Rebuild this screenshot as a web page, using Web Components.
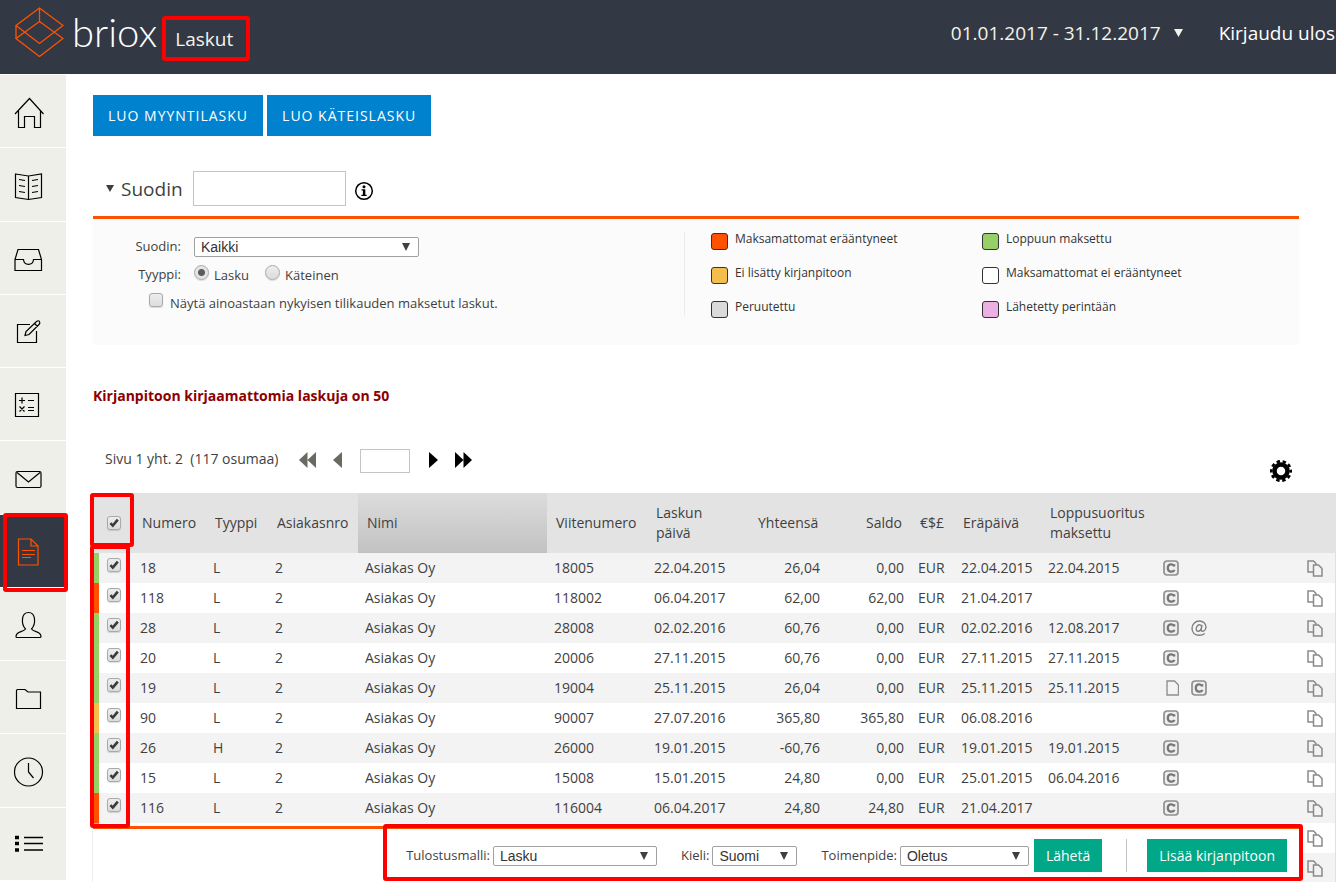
<!DOCTYPE html>
<html lang="fi">
<head>
<meta charset="utf-8">
<title>Laskut</title>
<style>
  html, body { margin: 0; height: 100%; }
  body { font: 14px/20px "Open Sans", "Noto Sans", sans-serif; color: #3f3f3f; background: #fff; overflow: hidden; }
</style>
</head>
<body>
<invoice-app></invoice-app>

<script>
const define = (name, html, setup) => customElements.define(name, class extends HTMLElement {
  constructor() {
    super();
    const t = document.createElement('template');
    t.innerHTML = html;
    this.attachShadow({ mode: 'open' }).append(t.content.cloneNode(true));
  }
  connectedCallback() { if (setup && !this.ready) { this.ready = true; setup(this, this.shadowRoot); } }
});

const tick = `
  input[type=checkbox], input[type=radio] {
    appearance: none; flex: none; box-sizing: border-box; width: 14px; height: 14px; margin: 0;
    border: 1px solid #a9a9a9; border-radius: 3px; background: linear-gradient(#ededed, #dcdcdc);
    box-shadow: 0 1px 1px #0002;
  }
  input[type=radio] { width: 15px; height: 15px; border-radius: 50%; }
  input[type=radio]:checked { background: radial-gradient(circle, #5b5b5b 0 3px, #e4e4e4 4px); }
  input[type=checkbox]:checked {
    background: url("data:image/svg+xml,%3Csvg xmlns='http://www.w3.org/2000/svg' viewBox='0 0 12 12'%3E%3Cpath d='M2.400 6.200l2.400 2.400L9.800 2.600' fill='none' stroke='%233b3b3b' stroke-width='2.600'/%3E%3C/svg%3E") center / 12px 12px no-repeat,
      linear-gradient(#ededed, #dcdcdc);
  }`;

const select = `
  select {
    appearance: none; box-sizing: border-box; height: 20px; margin: 0; padding: 0 24px 0 6px;
    border: 1px solid #a0a0a0; border-radius: 2px; color: #333;
    font: 14px/18px "Liberation Sans", Arial, sans-serif;
    background: #fff url("data:image/svg+xml,%3Csvg xmlns='http://www.w3.org/2000/svg' viewBox='0 0 8 8'%3E%3Cpath d='M0 0h8L4 8z' fill='%23404040'/%3E%3C/svg%3E") right 8px center / 8px 8px no-repeat;
  }`;

/* Red marker drawn around a part of the screen; its parent gives --inset. */
define('callout-frame', `
  <style>
    :host { position: absolute; inset: var(--inset, 0); z-index: 3; box-sizing: border-box;
      border: 4px solid #fe0000; border-radius: 3px; pointer-events: none; }
  </style>`);

define('app-header', `
  <style>
    :host { display: flex; align-items: center; flex: none; box-sizing: border-box; height: 74px; padding: 0 1px 10px 14px;
      background: #333845; color: #fff; font-size: 19px; line-height: 26px; }
    .logo { display: flex; align-items: center; color: inherit; text-decoration: none; }
    .logo svg { width: 50px; height: 50px; }
    .logo span { margin-left: 8px; font: 300 40px/48px Lato, sans-serif; }
    h1 { position: relative; margin: 14px 0 0 18px; font-size: 19px; font-weight: 500; line-height: 26px; --inset: -10px -17px -9px -13px; color: #f3f3ea; }
    nav { display: flex; align-items: center; margin: 2px 0 0 auto; }
    button { display: flex; align-items: center; gap: 13px; padding: 0; border: 0; background: none; font: inherit; color: #f3f3ea; }
    button svg { width: 9px; height: 8px; }
    nav a { margin-left: 36px; color: inherit; text-decoration: none; }
  </style>
  <a class="logo" href="#">
    <svg viewBox="0 0 50 50" fill="none" stroke="#ff5200" stroke-width="1.3"><path d="M25.500 1L2 18.500L25.500 36.500L49 18.500ZM25.500 1V14.500M25.500 14.500L2 31.500L25.500 49.500L49 31.500ZM2 18.500V31.500"/></svg>
    <span>briox</span>
  </a>
  <h1>Laskut<callout-frame></callout-frame></h1>
  <nav>
    <button>01.01.2017 - 31.12.2017 <svg viewBox="0 0 9 8"><path d="M0 0h9L4.500 8z" fill="currentColor"/></svg></button>
    <a href="#">Kirjaudu ulos</a>
  </nav>`);

define('nav-item', `
  <style>
    :host { display: flex; flex: 1; position: relative; min-height: 40px; border-bottom: 1px solid #fff; background: #eeefe9; color: #000; }
    :host([active]) { background: #333845; color: #ff5200; --inset: -2px -2px -5px 3px; }
    a { display: flex; flex: 1; align-items: center; padding: 3px 0 0 12px; color: inherit; }
    callout-frame { display: none; }
    :host([active]) callout-frame { display: block; }
  </style>
  <a href="#"><slot></slot></a><callout-frame></callout-frame>`,
  (el, root) => root.querySelector('a').setAttribute('aria-label', el.getAttribute('label')));

define('side-nav', `
  <style>
    :host { display: flex; flex-direction: column; flex: none; width: 66px; padding: 1px 0; box-sizing: border-box; }
    svg { width: 34px; height: 34px; fill: none; stroke: currentColor; stroke-width: 1.2; }
  </style>
  <nav-item label="Etusivu"><svg viewBox="0 0 34 34"><path d="M3 18L17.500 2.500L31.500 18M6.500 15V31.500H12.500V20.500H22.500V31.500H28.500V15"/></svg></nav-item>
  <nav-item label="Kirjanpito"><svg viewBox="0 0 34 34"><path d="M3.500 5L16.500 7L29.500 5V28.500L16.500 30.500L3.500 28.500ZM16.500 7V30.500M7 10.500l6 1M7 16.500l6 1M7 22.500l6 1M26 10.500l-6 1M26 16.500l-6 1M26 22.500l-6 1"/></svg></nav-item>
  <nav-item label="Saapuneet"><svg viewBox="0 0 34 34"><path d="M3 17.500L6 7.500H26.500L29.500 17.500V28.500H3ZM3 17.500H11.500C12 24 21 24 21.500 17.500H29.500"/></svg></nav-item>
  <nav-item label="Muokkaa"><svg viewBox="0 0 34 34"><path d="M18 9.500H5.500V27.500H24.500V16M13 20.500L14 16.500L24.500 6.500Q26.500 5 27.500 6.500Q28.500 8 27 9.500L17 19.500ZM13 20.500L17 19.500M22.500 8.500l3 3"/></svg></nav-item>
  <nav-item label="Laskin"><svg viewBox="0 0 34 34"><path d="M3.500 4.500H26.500V27.500H3.500ZM7 11.500h6M10 8.500v6M16 11.500h6M7.500 17.500l5 5M12.500 17.500l-5 5M16 18.500h6M16 21.500h6"/></svg></nav-item>
  <nav-item label="Viestit"><svg viewBox="0 0 34 34"><rect x="4" y="9.500" width="25" height="16" rx="1.500"/><path d="M5 10.500L16.500 20L28 10.500"/></svg></nav-item>
  <nav-item label="Laskut" active><svg viewBox="0 0 34 34"><path d="M6.500 4H19L26 11V30H6.500ZM19 4V11H26M10 15.500h13M10 19.500h13M10 22.500h9"/></svg></nav-item>
  <nav-item label="Asiakkaat"><svg viewBox="0 0 34 34"><path d="M13.500 21C9 16 9 4.500 16.500 4.500S24 16 19.500 21C22 24.500 29 23 29 28.500Q29 29.500 28 29.500H5Q4 29.500 4 28.500C4 23 11 24.500 13.500 21Z"/></svg></nav-item>
  <nav-item label="Tiedostot"><svg viewBox="0 0 34 34"><path d="M4.500 26V8.500Q4.500 7.500 5.500 7.500H13L16 10H28.500V26.500H4.500Z"/></svg></nav-item>
  <nav-item label="Ajankäyttö"><svg viewBox="0 0 34 34"><circle cx="16.500" cy="17" r="14"/><path d="M16.500 8V17L21.500 23"/></svg></nav-item>
  <nav-item label="Luettelo"><svg viewBox="0 0 34 34"><path d="M3 9.500h4M3 15.500h4M3 22h4" stroke-width="3.500"/><path d="M12 9.500h19M12 15.500h19M12 22h19" stroke-width="1.400"/></svg></nav-item>`);

define('app-button', `
  <style>
    :host { display: block; }
    button { display: block; border: 0; padding: 0 15px; height: 41px; background: #0082cf; color: #fff; font: 14px/20px "Open Sans", sans-serif; letter-spacing: 1px; text-transform: uppercase; white-space: nowrap; }
    :host([kind=green]) button { height: 33px; padding: 0 12px; background: #00a887; letter-spacing: 0; text-transform: none; }
  </style>
  <button><slot></slot></button>`);

define('legend-item', `
  <style>
    :host { display: flex; gap: 7px; font-size: 12px; line-height: 14px; color: #333; }
    i { flex: none; box-sizing: border-box; width: 17px; height: 17px; margin-top: 1px; border: 1px solid #333; border-radius: 3px; background: var(--swatch); }
  </style>
  <i></i><span><slot></slot></span>`);

define('invoice-filter', `
  <style>
    :host { display: block; }
    header { display: flex; align-items: center; padding-left: 13px; height: 35px; }
    header label { display: flex; align-items: center; gap: 7px; font-size: 19px; line-height: 28px; }
    header label svg { width: 8px; height: 7px; }
    header input { box-sizing: border-box; width: 153px; height: 35px; margin: 0 0 0 10px; border: 1px solid #c4c4c4; font: inherit; }
    .info { width: 20px; height: 20px; margin: 4px 0 0 8px; }
    .panel { display: flex; margin-top: 10px; border-top: 3px solid #ff5200; box-sizing: border-box; min-height: 129px; background: #fbfbfb; }
    .form { width: 49%; padding-top: 18px; font-size: 13px; box-sizing: border-box; }
    .row { display: grid; grid-template-columns: 88px auto; column-gap: 13px; justify-content: start; margin-bottom: 8px; line-height: 18px; }
    .row > :first-child { text-align: right; }
    .row select { width: 225px; }
    .radios { display: flex; gap: 16px; }
    .radios label, .only { display: flex; gap: 5px; line-height: 20px; }
    .only { gap: 7px; padding-left: 56px; }
    .legend { display: grid; grid-template-columns: 271px auto; grid-auto-rows: 34px; align-self: start; box-sizing: border-box; height: 84px; margin-top: 13px; padding: 0 0 0 26px; border-left: 1px solid #ececec; }
    ${tick}${select}
  </style>
  <header>
    <label for="q"><svg viewBox="0 0 8 7"><path d="M0 0h8L4 7z" fill="#3f3f3f"/></svg>Suodin</label>
    <input id="q" type="text">
    <svg class="info" viewBox="0 0 20 20"><circle cx="10" cy="10" r="8.300" fill="none" stroke="#000" stroke-width="1.500"/><circle cx="10" cy="5.700" r="1.500"/><path d="M7.500 8.200h3.800v5.500h1.400v1.300H7.400v-1.300h1.500V9.500H7.500z"/></svg>
  </header>
  <div class="panel">
    <div class="form">
      <div class="row"><label for="f">Suodin:</label><select id="f"><option>Kaikki</option></select></div>
      <div class="row"><span>Tyyppi:</span><div class="radios">
        <label><input type="radio" name="t" checked>Lasku</label><label><input type="radio" name="t">Käteinen</label></div></div>
      <label class="only"><input type="checkbox">Näytä ainoastaan nykyisen tilikauden maksetut laskut.</label>
    </div>
    <div class="legend">
      <legend-item style="--swatch:#ff5200">Maksamattomat erääntyneet</legend-item>
      <legend-item style="--swatch:#98d068">Loppuun maksettu</legend-item>
      <legend-item style="--swatch:#f4bd4c">Ei lisätty kirjanpitoon</legend-item>
      <legend-item style="--swatch:#fff">Maksamattomat ei erääntyneet</legend-item>
      <legend-item style="--swatch:#dadada">Peruutettu</legend-item>
      <legend-item style="--swatch:#ecb0e4">Lähetetty perintään</legend-item>
    </div>
  </div>`);

define('result-pager', `
  <style>
    :host { display: flex; height: 33px; padding-left: 12px; }
    .pages { display: flex; align-items: center; height: 24px; }
    .pages > span { white-space: pre; padding-bottom: 4px; }
    button { display: flex; padding: 0; border: 0; background: none; }
    button svg { height: 16px; fill: #6a6a62; }
    button.on svg { fill: #000; }
    .pages button { padding-bottom: 2px; }
    .first { margin-left: 21px; }
    .prev, .last { margin-left: 17px; }
    .first svg, .last svg { width: 17px; }
    .prev svg, .next svg { width: 9px; }
    input { box-sizing: border-box; width: 50px; height: 24px; margin: 0 19px 0 18px; border: 1px solid #c4c4c4; }
    .gear { align-self: flex-end; margin-left: auto; margin-right: 7px; }
    .gear svg { width: 22px; height: 22px; }
  </style>
  <div class="pages">
    <span>Sivu 1 yht. 2  (117 osumaa)</span>
    <button class="first" aria-label="Ensimmäinen"><svg viewBox="0 0 17 16"><path d="M8.500 0v16L0 8zM17 0v16L8.500 8z"/></svg></button>
    <button class="prev" aria-label="Edellinen"><svg viewBox="0 0 9 16"><path d="M9 0v16L0 8z"/></svg></button>
    <input type="text" aria-label="Sivu">
    <button class="next on" aria-label="Seuraava"><svg viewBox="0 0 9 16"><path d="M0 0v16l9-8z"/></svg></button>
    <button class="last on" aria-label="Viimeinen"><svg viewBox="0 0 17 16"><path d="M0 0v16l8.500-8zM8.500 0v16L17 8z"/></svg></button>
  </div>
  <button class="gear on" aria-label="Asetukset"><svg viewBox="0 0 22 22"><circle cx="11" cy="11" r="6.500" fill="none" stroke="#000" stroke-width="4.500"/><circle cx="11" cy="11" r="9.700" fill="none" stroke="#000" stroke-width="2.600" stroke-dasharray="3.400 2.695" stroke-dashoffset="1.700"/></svg></button>`);

const icons = {
  c: '<svg viewBox="0 0 16 16"><rect x="1" y="1" width="14" height="14" rx="3" fill="#eee" stroke="#8f8f8f" stroke-width="1.700"/><path d="M11.200 6.400V4.300M11.200 6.400C10 3.500 4.800 3.600 4.800 8S10 12.500 11.600 10" fill="none" stroke="#777" stroke-width="2.200"/></svg>',
  at: '<svg viewBox="0 0 16 16"><path d="M11 4.800L10.200 9.500Q10 11.300 11.500 11.200C13.500 11 15 9 15 7C15 3.500 12 1 8.500 1C4 1 1 4.300 1 8.300C1 12.500 4 15.300 8.200 15.300Q11.500 15.300 13.800 13.500M10.700 7C10.500 4.300 7.800 4.300 6.300 6C4.800 7.800 4.700 11 6.800 11.200C8.600 11.300 10.200 9.500 10.700 7" fill="none" stroke="#808080" stroke-width="1.400"/></svg>',
  doc: '<svg viewBox="0 0 16 16"><path d="M4 1h7.500l4 4v10H4z" fill="none" stroke="#8f8f8f" stroke-width="1.400"/></svg>'
};
const copy = '<svg viewBox="0 0 16 17"><path d="M6.500 12H1V1h5.500L9 3.500V5M6.500 5H11.500L15 8.500V16H6.500Z" fill="none" stroke="#8a8a8a" stroke-width="1.500"/></svg>';
const G = '#98d068', R = '#ff5200', Y = '#f4bd4c';
const rows = [
  [G, '18', 'L', '18005', '22.04.2015', '26,04', '0,00', '22.04.2015', '22.04.2015', 'c'],
  [R, '118', 'L', '118002', '06.04.2017', '62,00', '62,00', '21.04.2017', '', 'c'],
  [G, '28', 'L', '28008', '02.02.2016', '60,76', '0,00', '02.02.2016', '12.08.2017', 'c at'],
  [G, '20', 'L', '20006', '27.11.2015', '60,76', '0,00', '27.11.2015', '27.11.2015', 'c'],
  [G, '19', 'L', '19004', '25.11.2015', '26,04', '0,00', '25.11.2015', '25.11.2015', 'doc c'],
  [Y, '90', 'L', '90007', '27.07.2016', '365,80', '365,80', '06.08.2016', '', 'c'],
  [G, '26', 'H', '26000', '19.01.2015', '-60,76', '0,00', '19.01.2015', '19.01.2015', 'c'],
  [G, '15', 'L', '15008', '15.01.2015', '24,80', '0,00', '25.01.2015', '06.04.2016', 'c'],
  [R, '116', 'L', '116004', '06.04.2017', '24,80', '24,80', '21.04.2017', '', 'c'],
  [G], [G]
];
const row = ([color, nro, type, ref, date, total, saldo, due, paid, marks]) => `
  <tr><td class="check" style="--status:${color}">${nro ? `<input type="checkbox" checked aria-label="Valitse ${nro}">` : ''}</td>
  ${nro ? `<td>${nro}</td><td>${type}</td><td>2</td><td>Asiakas Oy</td><td>${ref}</td><td>${date}</td><td class="num">${total}</td><td class="num">${saldo}</td><td>EUR</td><td>${due}</td><td>${paid}</td>
  <td class="marks"><div>${marks.split(' ').map(m => icons[m]).join('')}</div></td>` : '<td colspan="12"></td>'}
  <td class="copy"><button aria-label="Kopioi">${copy}</button></td></tr>`;

define('invoice-table', `
  <style>
    :host { display: block; position: relative; --inset: 52px auto auto -3px; }
    table { width: 100%; table-layout: fixed; border-collapse: separate; border-spacing: 0; }
    th { position: relative; height: 60px; padding: 0 9px; box-sizing: border-box; background: #e3e3e3; text-align: left; font-weight: 400; }
    th.sorted { background: linear-gradient(#dcdcdc, #c2c2c2); }
    td { height: 30px; padding: 0 7px; box-sizing: border-box; white-space: nowrap; }
    tbody tr:nth-child(odd) { background: #f3f3f3; }
    .num { text-align: right; }
    th.check { padding: 0 0 0 14px; --inset: 0 -1px 6px -3px; }
    td.check { padding: 5px 0 0 8px; border-left: 6px solid var(--status); vertical-align: top; }
    .check input { display: block; }
    .marks { padding-left: 13px; }
    .marks div { display: flex; gap: 12px; }
    .marks svg { width: 16px; height: 16px; }
    .copy { padding: 0 0 0 17px; border-right: 1px solid #e0e0e0; }
    .copy button { display: block; padding: 0; border: 0; background: none; }
    .copy svg { display: block; width: 16px; height: 17px; }
    .rows { width: 40px; height: 283px; }
    ${tick}
  </style>
  <table>
    <colgroup>${[40, 73, 62, 90, 189, 100, 102, 78, 84, 43, 87, 109, 0, 46].map(w => w ? `<col style="width:${w}px">` : '<col>').join('')}</colgroup>
    <thead><tr><th class="check"><input type="checkbox" checked aria-label="Valitse kaikki"><callout-frame></callout-frame></th>
      <th>Numero</th><th>Tyyppi</th><th>Asiakasnro</th><th class="sorted">Nimi</th><th>Viitenumero</th><th>Laskun<br>päivä</th>
      <th class="num">Yhteensä</th><th class="num">Saldo</th><th>€$£</th><th>Eräpäivä</th><th>Loppusuoritus<br>maksettu</th><th></th><th></th></tr></thead>
    <tbody>${rows.map(row).join('')}</tbody>
  </table>
  <callout-frame class="rows"></callout-frame>`);

define('action-bar', `
  <style>
    :host { display: flex; align-items: center; justify-content: flex-end; box-sizing: border-box; height: 56px; padding: 0 12px 0 0; border-top: 3px solid #ff5200; background: #fff; box-shadow: -1px 0 #eee; font-size: 13px; }
    label { display: flex; align-items: center; gap: 3px; margin-right: 24px; }
    label span { padding-bottom: 2px; }
    label:last-of-type { margin-right: 5px; }
    .a { width: 164px; } .b { width: 85px; } .c { width: 129px; }
    hr { width: 1px; height: 33px; margin: 0 20px 0 24px; border: 0; background: #c4c4c4; }
    .frame { --inset: -5px -4px 1px auto; width: 920px; }
    ${select}
  </style>
  <label><span>Tulostusmalli:</span><select class="a"><option>Lasku</option></select></label>
  <label><span>Kieli:</span><select class="b"><option>Suomi</option></select></label>
  <label><span>Toimenpide:</span><select class="c"><option>Oletus</option></select></label>
  <app-button kind="green">Lähetä</app-button><hr><app-button kind="green">Lisää kirjanpitoon</app-button>
  <callout-frame class="frame"></callout-frame>`);

define('invoice-app', `
  <style>
    :host { display: flex; flex-direction: column; height: 100vh; }
    .body { display: flex; flex: 1; min-height: 0; }
    .content { position: relative; display: flex; flex: 1; min-width: 0; }
    main { flex: 1; min-width: 0; overflow: hidden auto; scrollbar-width: none; padding: 21px 0 0 27px; box-sizing: border-box; }
    .buttons { display: flex; gap: 4px; }
    invoice-filter { margin: 35px 37px 0 0; }
    .notice { margin: 41px 0 43px; font-weight: 700; color: #8b0000; }
    result-pager { margin: 0 37px 11px 0; }
    side-nav { position: relative; z-index: 1; }
    action-bar { position: absolute; inset: auto 37px 0 27px; }
  </style>
  <app-header></app-header>
  <div class="body">
    <side-nav></side-nav>
    <div class="content">
      <main>
        <div class="buttons"><app-button>Luo myyntilasku</app-button><app-button>Luo käteislasku</app-button></div>
        <invoice-filter></invoice-filter>
        <p class="notice">Kirjanpitoon kirjaamattomia laskuja on 50</p>
        <result-pager></result-pager>
        <invoice-table></invoice-table>
      </main>
      <action-bar></action-bar>
    </div>
  </div>`);
</script>
</body>
</html>
